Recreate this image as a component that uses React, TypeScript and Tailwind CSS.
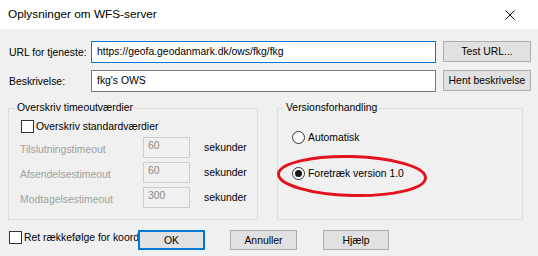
import type { ReactNode } from 'react'

const WinButton = ({ children, className = '', primary = false }: { children: ReactNode; className?: string; primary?: boolean }) => (
  <div
    className={`flex shrink-0 items-center justify-center bg-[#e1e1e1] ${
      primary ? 'border border-[#0078d7] shadow-[inset_0_0_0_1px_#0078d7]' : 'border border-[#adadad]'
    } ${className}`}
  >
    {children}
  </div>
)

const CheckBox = () => <div className="h-[13px] w-[13px] shrink-0 border border-[#333] bg-white" />

const Radio = ({ checked = false }: { checked?: boolean }) => (
  <div className="flex h-[13px] w-[13px] shrink-0 items-center justify-center rounded-full border border-[#333] bg-white">
    {checked && <div className="h-[7px] w-[7px] rounded-full bg-[#1a1a1a]" />}
  </div>
)

const TimeoutRow = ({ label, value }: { label: string; value: string }) => (
  <div className="mt-[4px] flex h-[21px] items-center">
    <span className="ml-[11px] w-[123px] pt-[3px] text-[#a0a0a0]">{label}</span>
    <div className="h-[21px] w-[47px] border border-[#cccccc] bg-[#f0f0f0] pl-[4px] pt-[1px] text-[#8a8a8a]">{value}</div>
    <span className="ml-[14px]">sekunder</span>
  </div>
)

export default function App() {
  return (
    <div className="h-[256px] w-[538px] overflow-hidden font-['Liberation_Sans',Arial,sans-serif] text-[10.4px] leading-[13px] text-black">
      {/* titellinje */}
      <div className="flex h-[29px] items-center justify-between bg-white pl-[8px] pr-[23px]">
        <span className="text-[11.8px]">Oplysninger om WFS-server</span>
        <svg width="10" height="10" viewBox="0 0 10 10" className="mt-[1px]">
          <path d="M0.5 0.5 L9.5 9.5 M9.5 0.5 L0.5 9.5" stroke="#111" strokeWidth="1" fill="none" />
        </svg>
      </div>

      <div className="relative h-[227px] bg-[#f0f0f0] pt-[12px]">
        <div className="flex items-start pl-[9px]">
          <span className="mt-[5px] w-[82px]">URL for tjeneste:</span>
          <div className="h-[22px] w-[345px] border border-[#0078d7] bg-white pl-[5px] pt-[3px]">
            https://geofa.geodanmark.dk/ows/fkg/fkg
          </div>
          <WinButton className="ml-[7px] h-[21px] w-[88px]">Test URL...</WinButton>
        </div>

        <div className="mt-[7px] flex items-start pl-[9px]">
          <span className="mt-[5px] w-[82px]">Beskrivelse:</span>
          <div className="h-[22px] w-[345px] border border-[#7a7a7a] bg-white pl-[5px] pt-[3px]">fkg's OWS</div>
          <WinButton className="ml-[7px] h-[21px] w-[88px]">Hent beskrivelse</WinButton>
        </div>

        <div className="mt-[10px] flex gap-[19px] pl-[8px]">
          <fieldset className="h-[118px] w-[250px] border border-[#dcdcdc]">
            <legend className="ml-[6px] px-[2px] leading-[12px]">Overskriv timeoutværdier</legend>
            <div className="mt-[5px] flex h-[14px] items-center gap-[2px] pl-[12px]">
              <CheckBox />
              <span>Overskriv standardværdier</span>
            </div>
            <div className="mt-[1px]">
              <TimeoutRow label="Tilslutningstimeout" value="60" />
              <TimeoutRow label="Afsendelsestimeout" value="60" />
              <TimeoutRow label="Modtagelsestimeout" value="300" />
            </div>
          </fieldset>

          <fieldset className="h-[118px] w-[246px] border border-[#dcdcdc]">
            <legend className="ml-[6px] px-[2px] leading-[12px]">Versionsforhandling</legend>
            <div className="mt-[17px] flex items-center gap-[3px] pl-[14px]">
              <Radio />
              <span>Automatisk</span>
            </div>
            <div className="mt-[23px] flex items-center gap-[3px] pl-[14px]">
              <Radio checked />
              <span>Foretræk version 1.0</span>
            </div>
          </fieldset>
        </div>

        <div className="mt-[10px] flex items-start pl-[9px]">
          <div className="flex h-[15px] w-[129px] items-center gap-[2px] whitespace-nowrap">
            <CheckBox />
            <span>Ret rækkefølge for koordi</span>
          </div>
          <WinButton primary className="h-[20px] w-[67px]">OK</WinButton>
          <WinButton className="ml-[25px] h-[20px] w-[67px]">Annuller</WinButton>
          <WinButton className="ml-[26px] h-[20px] w-[66px]">Hjælp</WinButton>
        </div>

        {/* rød markering */}
        <svg className="pointer-events-none absolute left-[275px] top-[124px]" width="154" height="46" viewBox="0 0 154 46">
          <ellipse cx="77" cy="23" rx="73.5" ry="19.5" fill="none" stroke="#e3121d" strokeWidth="3" transform="rotate(1.5 77 23)" />
        </svg>
      </div>
    </div>
  )
}
